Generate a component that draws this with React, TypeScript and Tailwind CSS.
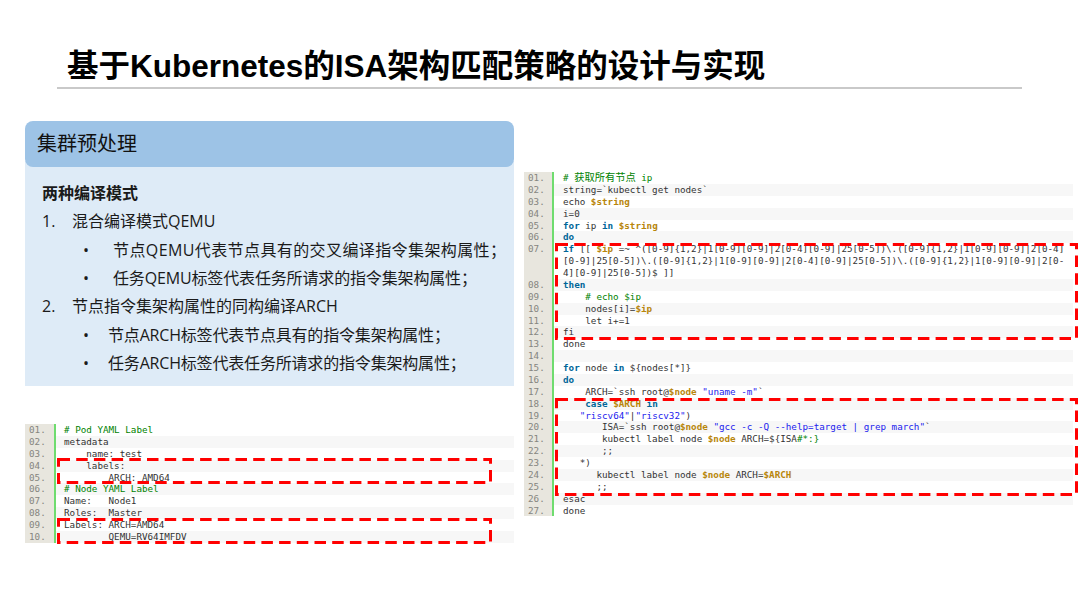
import React from "react";

type Seg = [string, string?];
const K = "font-bold text-[#006699]";
const C = "text-[#008200]";
const V = "font-bold text-[#b8860b]";
const S = "text-[#2222ee]";

type Line = { n: string; segs: Seg[]; extra?: string[] };

const leftLines: Line[] = [
  { n: "01.", segs: [["# Pod YAML Label", C]] },
  { n: "02.", segs: [["metadata"]] },
  { n: "03.", segs: [["    name: test"]] },
  { n: "04.", segs: [["    labels:"]] },
  { n: "05.", segs: [["        ARCH: AMD64"]] },
  { n: "06.", segs: [["# Node YAML Label", C]] },
  { n: "07.", segs: [["Name:   Node1"]] },
  { n: "08.", segs: [["Roles:  Master"]] },
  { n: "09.", segs: [["Labels: ARCH=AMD64"]] },
  { n: "10.", segs: [["        QEMU=RV64IMFDV"]] },
];

const rightLines: Line[] = [
  { n: "01.", segs: [["# ", C], ["获取所有节点", `${C} text-[10.25px]`], [" ip", C]] },
  { n: "02.", segs: [["string=`kubectl get nodes`"]] },
  { n: "03.", segs: [["echo "], ["$string", V]] },
  { n: "04.", segs: [["i=0"]] },
  { n: "05.", segs: [["for", K], [" ip "], ["in", K], [" "], ["$string", V]] },
  { n: "06.", segs: [["do", K]] },
  {
    n: "07.",
    segs: [["if", K], [" [[ "], ["$ip", V], [" =~ ^([0-9]{1,2}|1[0-9][0-9]|2[0-4][0-9]|25[0-5])\\.([0-9]{1,2}|1[0-9][0-9]|2[0-4]"]],
    extra: ["[0-9]|25[0-5])\\.([0-9]{1,2}|1[0-9][0-9]|2[0-4][0-9]|25[0-5])\\.([0-9]{1,2}|1[0-9][0-9]|2[0-", "4][0-9]|25[0-5])$ ]]"],
  },
  { n: "08.", segs: [["then", K]] },
  { n: "09.", segs: [["    # echo $ip", C]] },
  { n: "10.", segs: [["    nodes[i]="], ["$ip", V]] },
  { n: "11.", segs: [["    let i+=1"]] },
  { n: "12.", segs: [["fi"]] },
  { n: "13.", segs: [["done"]] },
  { n: "14.", segs: [[" "]] },
  { n: "15.", segs: [["for", K], [" node "], ["in", K], [" ${nodes[*]}"]] },
  { n: "16.", segs: [["do", K]] },
  { n: "17.", segs: [["    ARCH=`ssh root@"], ["$node", V], [" "], ['"uname -m"', S], ["`"]] },
  { n: "18.", segs: [["    "], ["case", K], [" "], ["$ARCH", V], [" "], ["in", K]] },
  { n: "19.", segs: [["   "], ['"riscv64"', S], ["|"], ['"riscv32"', S], [")"]] },
  { n: "20.", segs: [["       ISA=`ssh root@"], ["$node", V], [" "], ['"gcc -c -Q --help=target | grep march"', S], ["`"]] },
  { n: "21.", segs: [["       kubectl label node "], ["$node", V], [" ARCH=${ISA"], ["#*:}", C]] },
  { n: "22.", segs: [["       ;;"]] },
  { n: "23.", segs: [["   *)"]] },
  { n: "24.", segs: [["      kubectl label node "], ["$node", V], [" ARCH="], ["$ARCH", V]] },
  { n: "25.", segs: [["      ;;"]] },
  { n: "26.", segs: [["esac"]] },
  { n: "27.", segs: [["done"]] },
];

function Code({ lines, gutter, pad }: { lines: Line[]; gutter: string; pad: string }) {
  return (
    <div className="font-['DejaVu_Sans_Mono','Noto_Sans_CJK_SC',monospace] text-[9.25px] leading-[11.88px] text-[#333333]">
      {lines.map((l, i) => (
        <div key={l.n} className="flex">
          <div className={`${gutter} shrink-0 bg-[#e8e6de] pl-[4px] text-[#85857f]`}>{l.n}</div>
          <div className="w-[2px] shrink-0 bg-[#6fdc6f]" />
          <div className={`${pad} min-w-0 flex-1 whitespace-pre ${i % 2 === 1 ? "bg-[#f7f7f7]" : "bg-white"}`}>
            <div className="h-[11.88px]">
              {l.segs.map((s, j) => (
                <span key={j} className={s[1]}>
                  {s[0]}
                </span>
              ))}
            </div>
            {l.extra?.map((t) => (
              <div key={t} className="h-[11.88px]">
                {t}
              </div>
            ))}
          </div>
        </div>
      ))}
    </div>
  );
}

function Dashed({ className, w, h }: { className: string; w: number; h: number }) {
  return (
    <svg className={`pointer-events-none absolute ${className}`} width={w} height={h} viewBox={`0 0 ${w} ${h}`} fill="none">
      <rect x="1.5" y="1.5" width={w - 3} height={h - 3} stroke="#ff0000" strokeWidth="3" strokeDasharray="11.5 6.2" />
    </svg>
  );
}

function Sub({ children, pad }: { children: React.ReactNode; pad: string }) {
  return (
    <div className="flex h-[28.4px] items-center">
      <span className="w-[71px] shrink-0 pl-[41px] text-[16px]">•</span>
      <span className={`${pad} whitespace-pre`}>{children}</span>
    </div>
  );
}

export default function App() {
  return (
    <div className="h-[606px] w-[1080px] overflow-hidden bg-white font-['Open_Sans','Noto_Sans_CJK_SC',sans-serif] text-[#1a1a1a]">
      <div className="ml-[57px] h-[89px] w-[965px] border-b-2 border-[#c9c9c9] pl-[10px] pt-[45px]">
        <h1 className="font-['Liberation_Sans','Noto_Sans_CJK_SC',sans-serif] text-[31.5px] font-bold leading-[43px] text-black">
          基于Kubernetes的ISA架构匹配策略的设计与实现
        </h1>
      </div>
      <div className="flex pl-[25px] pt-[32px]">
        <div className="w-[489px] shrink-0">
          <div className="relative z-10 flex h-[46px] items-center rounded-[8px] bg-[#9dc3e6] pl-[12px] text-[20px] text-[#111111]">
            集群预处理
          </div>
          <div className="-mt-[6px] h-[225px] bg-[#deebf7] pl-[17px] pt-[19px] text-[16px]">
            <div className="flex h-[24px] items-center font-['Noto_Sans_CJK_SC',sans-serif] font-bold">两种编译模式</div>
            <div className="mt-[3px] flex h-[28.4px] items-center">
              <span className="w-[30px] shrink-0">1.</span>混合编译模式QEMU
            </div>
            <Sub pad="tracking-[0.4px]">节点QEMU代表节点具有的交叉编译指令集架构属性；</Sub>
            <Sub pad="tracking-[-0.15px]">任务QEMU标签代表任务所请求的指令集架构属性；</Sub>
            <div className="flex h-[28.4px] items-center">
              <span className="w-[30px] shrink-0">2.</span>节点指令集架构属性的同构编译ARCH
            </div>
            <Sub pad="-ml-[5px] tracking-[-0.18px]">节点ARCH标签代表节点具有的指令集架构属性；</Sub>
            <Sub pad="-ml-[5px] tracking-[-0.18px]">任务ARCH标签代表任务所请求的指令集架构属性；</Sub>
          </div>
          <div className="relative mt-[38px]">
            <Code lines={leftLines} gutter="w-[29px]" pad="pl-[8px]" />
            <Dashed className="left-[32px] top-[34px]" w={435} h={26} />
            <Dashed className="left-[32px] top-[94px]" w={435} h={26} />
          </div>
        </div>
        <div className="ml-[10px] mt-[51px] w-[549px] shrink-0">
          <div className="relative">
            <Code lines={rightLines} gutter="w-[28px]" pad="pl-[9px]" />
            <Dashed className="left-[31px] top-[71px]" w={523} h={97} />
            <Dashed className="left-[31px] top-[226px]" w={523} h={98} />
          </div>
        </div>
      </div>
    </div>
  );
}
